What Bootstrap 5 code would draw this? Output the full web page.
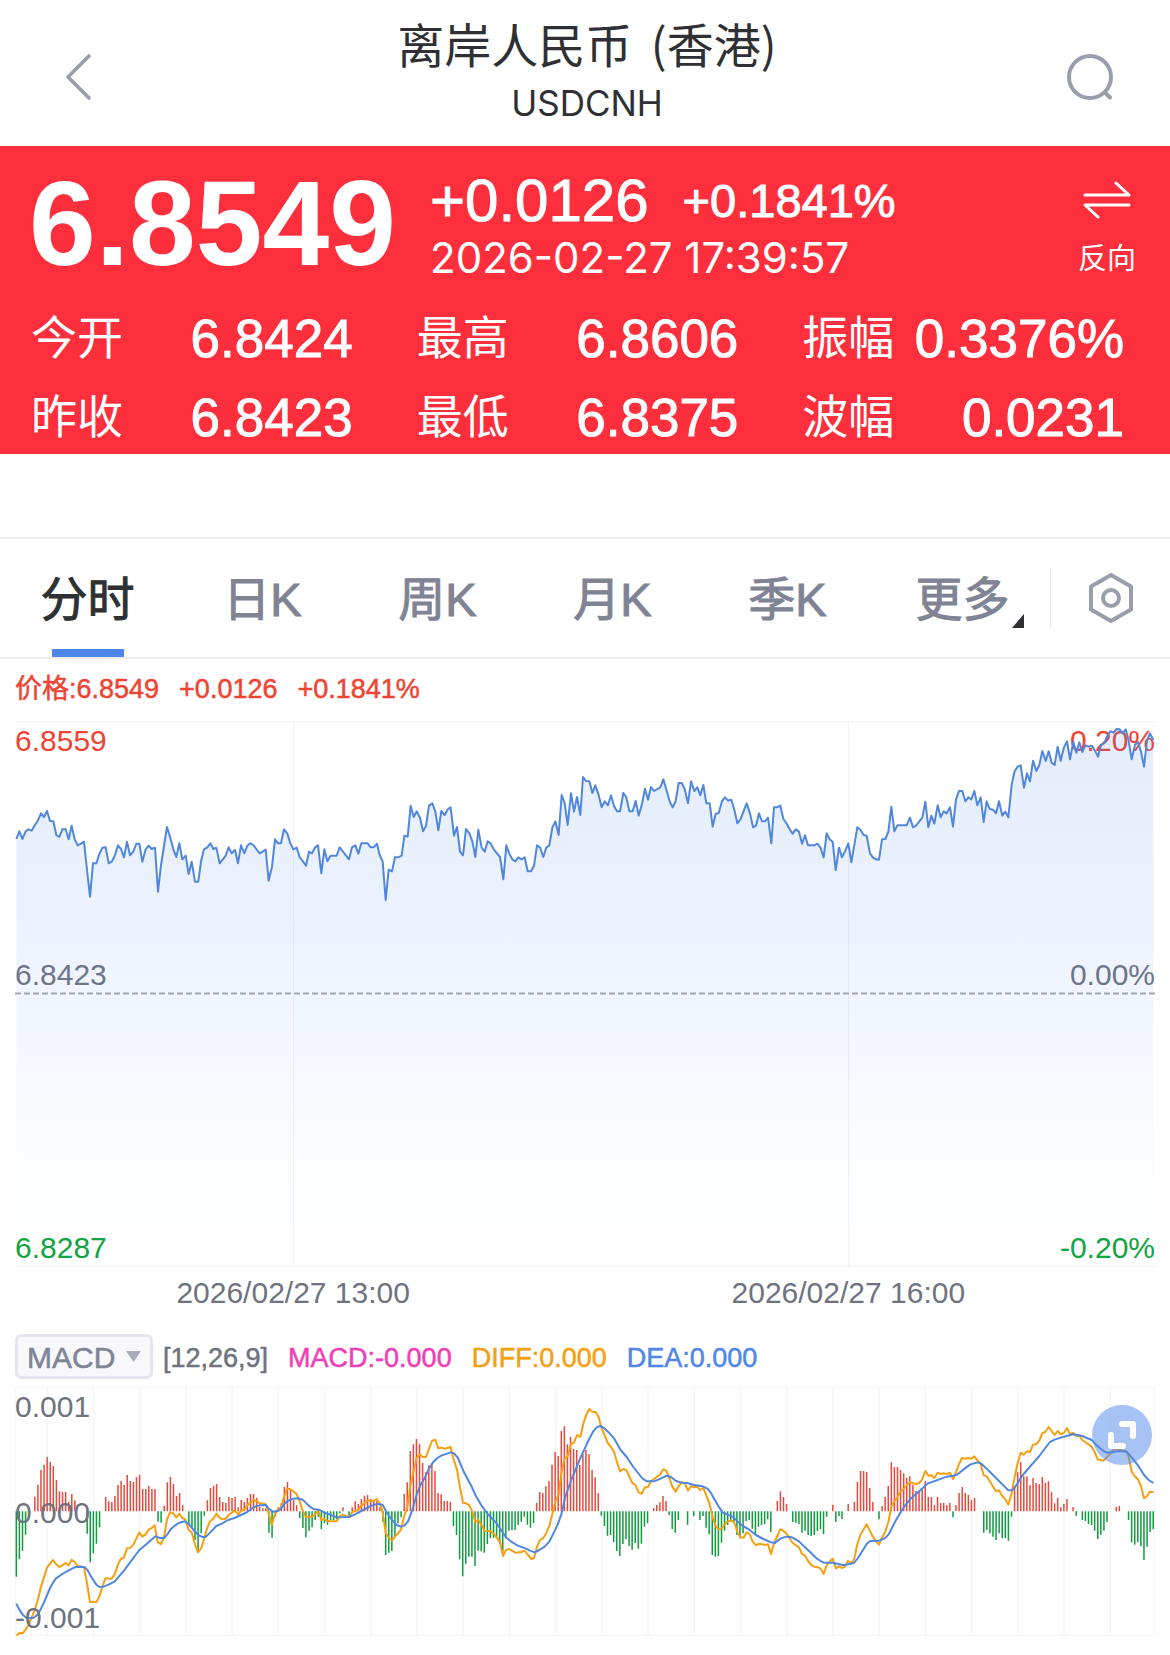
<!DOCTYPE html>
<html lang="zh-CN">
<head>
<meta charset="utf-8">
<meta name="viewport" content="width=device-width, initial-scale=1">
<title>离岸人民币 (香港) USDCNH</title>
<link href="https://cdn.jsdelivr.net/npm/bootstrap@5.3.0/dist/css/bootstrap.min.css" rel="stylesheet">
<style>
body { font-family: "Liberation Sans", "Noto Sans CJK SC", sans-serif; color: #2f3033; background: #fff; }
.medium-face { -webkit-text-stroke: 1px currentColor; }
.medium-small { -webkit-text-stroke: 0.5px currentColor; }

.app-head { height: 146px; padding: 0 58px 0 62px; }
.app-name { font-family: "Noto Sans CJK SC", sans-serif; font-size: 47px; line-height: 48px; font-weight: 400; padding-bottom: 12px; }
.app-code { font-family: Inter, sans-serif; font-size: 35px; line-height: 48px; }
.icon-btn { border: 0; background: none; padding: 0; color: #9a9dac; line-height: 0; }
.head-side { width: 46px; }

.quote { height: 308px; background: #fd2f3c; color: #fff; }
.quote-top { height: 152px; padding: 0 34px 0 29px; }
.quote-price { font-size: 120px; line-height: 120px; padding-top: 2px; }
.quote-side { padding: 12px 0 0 34px; }
.quote-diff { font-size: 60px; line-height: 60px; }
.quote-pct { font-size: 47px; line-height: 60px; padding-left: 34px; }
.quote-time { font-family: Inter, sans-serif; font-size: 42px; line-height: 54px; }
.flip-btn { font-family: "Noto Sans CJK SC", sans-serif; font-size: 29px; color: #fff; border: 0; background: none; padding: 8px 0 0; }
.flip-btn .flip-icon { height: 60px; }
.flip-btn .flip-text { line-height: 52px; }
.quote-grid { padding: 0 46px 0 31px; column-gap: 64px; }
.quote-cell { flex: 1 1 0; height: 79px; }
.quote-label { font-family: "Noto Sans CJK SC", sans-serif; font-size: 46px; line-height: 60px; padding-bottom: 8px; }
.quote-num { font-size: 53px; line-height: 60px; padding-top: 2px; }

.tab-bar { margin-top: 83px; height: 122px; border-top: 2px solid #ececef; border-bottom: 2px solid #ececef; }
.tab-bar .nav-link { position: relative; height: 118px; padding: 4px 0 0; font-size: 47px; line-height: 114px; font-weight: 400; text-align: center; color: #7f8394; }
.tab-bar .nav-link.active { color: #2f3033; }
.tab-bar .nav-link.active::after { content: ""; position: absolute; left: 50%; bottom: 0; width: 72px; margin-left: -36px; height: 8px; background: #4f87e8; }
.more-mark { position: absolute; right: 26px; bottom: 29px; border-left: 12px solid transparent; border-bottom: 14px solid #2f3033; }
.tab-tools { width: 120px; }
.tab-rule { width: 1px; height: 60px; background: #e6e6ea; }

.panel { padding: 0 15px; }
.legend-row { height: 62px; padding-bottom: 2px; font-size: 27px; column-gap: 20px; color: #ef4433; }
.plot svg { display: block; width: 100%; height: 100%; }
.price-plot { height: 546px; }
.macd-plot { height: 249px; }
.axis { font-size: 30px; line-height: 36px; color: #6f7380; padding-top: 2px; }
.axis-mid { padding-bottom: 2px; }
.up-text { color: #ef4433; }
.down-text { color: #0fa544; padding-bottom: 1px; }
.time-row { height: 54px; font-size: 30px; line-height: 52px; color: #6f7380; }
.time-first { width: 48.8%; }
.time-second { width: 48.6%; }
.macd-row { height: 66px; padding-top: 5px; font-size: 27px; color: #6f7380; column-gap: 20px; }
.macd-row > span { padding-top: 3px; }
.macd-pick { position: relative; margin-right: -10px; }
.macd-pick select { appearance: none; width: 138px; height: 45px; padding: 2px 0 0 9px; font-size: 30px; line-height: 36px; color: #7f8394; background: #f7f7fc; border: 3px solid #e5e5f0; border-radius: 6px; }
.macd-pick svg { position: absolute; right: 12px; top: 17px; pointer-events: none; }
.macd-tone { color: #f03fb6; }
.diff-tone { color: #f5a011; }
.dea-tone { color: #4f87e8; }
.zoom-btn { position: absolute; right: 3px; top: 18px; width: 60px; height: 60px; border: 0; border-radius: 50%; padding: 0; background: rgba(80, 136, 238, .5); }
.page-foot { height: 18px; }
</style>
<script src="https://cdn.jsdelivr.net/npm/bootstrap@5.3.0/dist/js/bootstrap.bundle.min.js"></script>
</head>
<body>

<header class="app-head d-flex align-items-center justify-content-between">
  <button class="icon-btn head-side text-start pt-2" type="button" aria-label="返回">
    <svg width="30" height="48" viewBox="0 0 30 48" fill="none" stroke="currentColor" stroke-width="3.6" stroke-linecap="round" stroke-linejoin="round"><path d="M27 3 6 24 27 45"/></svg>
  </button>
  <div class="text-center">
    <h1 class="app-name m-0">离岸人民币<span class="ms-2"> (香港)</span></h1>
    <div class="app-code">USDCNH</div>
  </div>
  <button class="icon-btn head-side pt-2" type="button" aria-label="搜索">
    <svg width="48" height="48" viewBox="0 0 48 48" fill="none" stroke="currentColor" stroke-width="4" stroke-linecap="round"><circle cx="24" cy="24" r="21"/><path d="M39 39.500 44 44.500"/></svg>
  </button>
</header>

<main>
<section class="quote">
  <div class="quote-top d-flex align-items-center">
    <strong class="quote-price">6.8549</strong>
    <div class="quote-side flex-fill">
      <div class="d-flex medium-face"><span class="quote-diff">+0.0126</span><span class="quote-pct">+0.1841%</span></div>
      <div class="quote-time">2026-02-27 17:39:57</div>
    </div>
    <button class="flip-btn d-flex flex-column align-items-center" type="button">
      <span class="flip-icon d-flex align-items-center"><svg width="48" height="40" viewBox="0 0 48 40" fill="none" stroke="#fff" stroke-width="3" stroke-linecap="round" stroke-linejoin="round"><path d="M2 15H46L33 3"/><path d="M46 25H2L15 37"/></svg></span>
      <span class="flip-text">反向</span>
    </button>
  </div>
  <div class="quote-grid d-flex">
    <div class="quote-cell d-flex align-items-center justify-content-between"><span class="quote-label">今开</span><span class="quote-num medium-face">6.8424</span></div>
    <div class="quote-cell d-flex align-items-center justify-content-between"><span class="quote-label">最高</span><span class="quote-num medium-face">6.8606</span></div>
    <div class="quote-cell d-flex align-items-center justify-content-between"><span class="quote-label">振幅</span><span class="quote-num medium-face">0.3376%</span></div>
  </div>
  <div class="quote-grid d-flex">
    <div class="quote-cell d-flex align-items-center justify-content-between"><span class="quote-label">昨收</span><span class="quote-num medium-face">6.8423</span></div>
    <div class="quote-cell d-flex align-items-center justify-content-between"><span class="quote-label">最低</span><span class="quote-num medium-face">6.8375</span></div>
    <div class="quote-cell d-flex align-items-center justify-content-between"><span class="quote-label">波幅</span><span class="quote-num medium-face">0.0231</span></div>
  </div>
</section>

<div class="tab-bar d-flex align-items-center">
  <nav class="nav flex-fill flex-nowrap medium-face" aria-label="周期">
    <a class="nav-link active col" href="#" aria-current="page">分时</a>
    <a class="nav-link col" href="#">日K</a>
    <a class="nav-link col" href="#">周K</a>
    <a class="nav-link col" href="#">月K</a>
    <a class="nav-link col" href="#">季K</a>
    <a class="nav-link col" href="#">更多<span class="more-mark"></span></a>
  </nav>
  <div class="tab-tools d-flex align-items-center">
    <span class="tab-rule"></span>
    <button class="icon-btn mx-auto" type="button" aria-label="图表设置">
      <svg width="48" height="52" viewBox="0 0 48 52" fill="none" stroke="currentColor" stroke-width="4" stroke-linejoin="round"><path d="M24 3 44 14.500V37.500L24 49 4 37.500V14.500Z"/><circle cx="24" cy="26" r="8"/></svg>
    </button>
  </div>
</div>

<section class="panel">
  <div class="legend-row medium-small d-flex align-items-center"><span>价格:6.8549</span><span>+0.0126</span><span>+0.1841%</span></div>
  <div class="plot price-plot position-relative">
    <div class="axis position-absolute top-0 start-0 w-100 h-100 d-flex flex-column">
      <div class="h-50 d-flex flex-column justify-content-between">
        <div class="d-flex justify-content-between up-text"><span>6.8559</span><span>0.20%</span></div>
        <div class="axis-mid d-flex justify-content-between"><span>6.8423</span><span>0.00%</span></div>
      </div>
      <div class="h-50 d-flex justify-content-between align-items-end down-text"><span>6.8287</span><span>-0.20%</span></div>
    </div>
    <div class="position-relative h-100"><svg id="priceChart" viewBox="45 3 3420 1638" preserveAspectRatio="none" role="img" aria-label="分时走势"></svg></div>
  </div>
  <div class="time-row d-flex text-center"><span class="time-first">2026/02/27 13:00</span><span class="time-second">2026/02/27 16:00</span></div>

  <div class="macd-row medium-small d-flex align-items-center">
    <label class="macd-pick">
      <select aria-label="指标"><option>MACD</option></select>
      <svg width="15" height="11" viewBox="0 0 15 11"><path d="M0 0H15L7.500 11Z" fill="#a9acb9"/></svg>
    </label>
    <span>[12,26,9]</span>
    <span class="macd-tone">MACD:-0.000</span>
    <span class="diff-tone">DIFF:0.000</span>
    <span class="dea-tone">DEA:0.000</span>
  </div>
  <div class="plot macd-plot position-relative">
    <svg id="macdChart" viewBox="45 201 3420 747" preserveAspectRatio="none" role="img" aria-label="MACD"></svg>
    <div class="axis position-absolute top-0 start-0 h-100 d-flex flex-column justify-content-between"><span>0.001</span><span>0.000</span><span>-0.001</span></div>
    <button class="zoom-btn" type="button" aria-label="全屏">
      <svg width="60" height="60" viewBox="0 0 60 60" fill="none" stroke="#fff" stroke-width="6" stroke-linecap="round" stroke-linejoin="round"><path d="M30 19H41V31"/><path d="M19 30V41H31"/></svg>
    </button>
  </div>
</section>
</main>
<div class="page-foot"></div>

<script>
/* Each series is stored in three blocks; a block is [x offset, flat list of x,y]. */
const price = [
 [0, [49,357,58,334,67,357,77,334,86,328,95,332,104,316,113,303,123,280,132,291,141,273,150,303,160,304,169,345,178,351,187,328,197,328,206,358,215,317,224,358,233,376,243,371,252,365,261,450,270,530,279,430,289,430,298,402,307,383,317,382,326,430,335,425,344,408,354,376,363,387,372,412,381,365,390,406,400,394,409,371,418,371,427,425,437,388,446,377,455,387,465,383,474,515,483,435,501,321,510,350,520,388,529,411,538,370,547,418,557,407,566,462,575,425,585,485,595,485,603,424,612,388,622,382,631,370,640,387,649,383,659,430,677,407,686,382,695,400,705,390,714,430,723,376,733,400,742,377,751,370,760,375,779,400,797,389,806,482,816,440,825,358,834,370,843,370,852,328,862,341,871,370,880,388,890,383,899,411,918,437,927,395,936,400,945,382,954,376,964,460,973,388,982,424,992,407,1010,407,1019,382,1047,418,1056,382,1066,376,1075,401,1084,370,1103,370,1112,382,1121,382,1131,371,1139,405,1148,425]],
 [1140, [17,540,26,449,36,454,45,412,54,412,65,407,73,347,83,350,92,257,101,291,110,274,120,293,129,334,138,318,147,257,157,250,166,275,175,331,184,273,194,285,203,268,212,262,222,347,231,321,240,395,249,406,258,327,268,340,277,364,286,411,295,329,305,383,314,395,323,364,332,370,341,388,360,411,370,478,379,376,388,401,397,418,406,424,415,412,424,418,434,412,443,454,453,454,462,437,471,376,480,382,490,411,499,382,508,376,517,323,526,304,536,345,545,225,554,250,563,315,573,220,582,275,591,231,601,285,609,171,618,183,628,184,637,219,646,196,656,226,665,262,674,244,684,256,693,226,702,258,711,274,720,274,730,219,739,232,748,274,758,274,767,243,776,287,785,256,795,206,804,239,813,201,822,213,841,202,850,178,869,244,878,262,887,243,896,189,905,189,914,207,924,250,933,184,943,213,952,202,961,226,970,195,979,250,989,250,998,320,1007,281,1016,280,1026,243,1035,232,1044,242,1054,239,1063,269,1072,310,1081,299,1100,250,1110,280,1119,322,1128,317,1137,280,1146,304,1155,304,1164,293,1174,370,1182,262,1191,262]],
 [2310, [31,257,40,297,50,311,59,328,68,341,77,328,87,335,96,371,105,346,114,376,133,376,142,371,151,382,161,412,170,340,179,358,188,365,197,450,207,383,216,412,225,394,235,370,244,427,262,322,271,329,281,345,290,347,300,400,309,413,318,418,327,419,336,358,346,357,355,335,364,260,373,334,382,316,410,316,420,293,429,322,438,317,457,293,466,245,475,322,484,287,493,311,503,256,512,292,521,274,530,280,540,262,549,320,558,238,567,213,577,213,586,244,595,232,604,238,613,213,622,256,632,232,641,306,650,244,659,267,669,269,678,280,687,244,697,287,706,275,715,292,725,195,734,153,743,140,752,136,762,203,771,160,780,184,789,122,799,153,808,135,817,93,827,123,836,94,845,128,854,135,863,80,872,122,882,82,891,64,900,118,910,66,919,98,928,67,937,96,946,76,957,80,966,77,975,92,984,110,993,75,1002,70,1011,50,1021,34,1030,38,1040,27,1049,28,1058,40,1067,28,1076,62,1085,118,1095,74,1104,66,1113,95,1122,140,1131,62,1140,40,1150,60]]
];
const diff = [
 [0, [49,947,58,939,68,940,77,928,86,915,95,893,104,870,113,842,122,804,132,772,141,743,150,731,159,720,168,732,178,741,187,736,197,729,206,736,215,719,224,726,233,738,252,742,261,790,270,846,289,846,298,830,307,801,316,775,335,776,344,763,353,736,362,717,372,712,381,685,390,684,400,674,418,637,427,650,436,644,446,629,455,624,464,616,473,667,483,672,492,652,501,598,510,577,520,580,529,592,538,581,547,594,556,598,566,630,575,637,584,670,594,697,604,684,612,658,621,626,630,604,640,596,649,581,658,593,667,598,677,596,686,585,695,578,704,571,714,583,723,573,733,568,742,556,751,548,760,540,769,543,779,550,797,552,806,580,815,614,825,582,834,567,843,562,852,532,861,507,871,507,880,514,890,523,899,544,908,572,917,590,935,590,945,584,954,570,964,600,973,597,982,604,1010,604,1019,589,1028,584,1047,592,1056,577,1065,573,1075,570,1084,556,1093,550,1102,541,1112,543,1121,543,1130,537,1139,550]],
 [1140, [8,577,17,638,26,653,36,662,45,649,54,641,63,629,72,590,82,562,91,497,101,453,110,414,119,403,129,411,138,411,147,386,156,363,166,359,175,385,184,383,194,386,212,381,221,419,231,449,240,503,249,548,258,550,268,556,277,575,286,607,295,599,304,614,314,632,332,633,341,641,350,652,360,667,369,708,378,690,388,687,406,698,424,696,434,692,444,705,454,717,462,714,471,680,480,660,489,655,498,641,508,617,517,583,526,545,536,523,545,454,554,415,563,409,573,372,582,368,591,345,601,351,610,311,619,284,628,267,637,275,647,276,656,292,665,325,684,370,693,381,702,396,711,426,720,454,730,447,739,450,757,489,766,495,776,517,785,521,795,502,804,501,813,484,822,477,832,470,841,463,850,448,859,452,868,474,877,500,887,515,896,498,905,487,914,489,924,512,933,498,942,502,951,500,961,510,970,504,979,527,988,549,998,592,1008,620,1016,628,1026,624,1035,611,1044,604,1053,601,1063,608,1072,636,1081,652,1091,653,1100,637,1109,642,1118,665,1128,676,1137,671,1155,675,1164,673,1173,702,1182,670]],
 [2310, [22,648,31,628,40,632,50,642,59,655,68,669,87,682,96,702,105,706,114,723,124,735,133,740,142,741,151,745,161,762,170,736,179,725,188,716,198,745,207,739,216,744,225,740,234,722,244,730,253,716,262,672,271,645,281,628,290,613,299,631,308,649,318,664,327,674,336,654,346,634,355,606,364,560,373,544,382,532,392,514,401,507,410,495,420,486,429,490,438,492,447,489,456,480,466,453,475,467,484,466,493,474,503,458,512,462,521,460,530,462,540,458,549,477,558,457,567,432,576,414,586,416,595,414,604,416,613,409,622,421,632,432,641,466,650,469,678,514,687,511,697,528,706,538,715,554,725,518,734,470,743,430,752,398,761,404,771,394,780,396,789,374,799,372,808,362,817,339,826,336,836,321,845,333,854,345,863,333,872,343,882,338,891,324,900,343,909,338,919,348,928,348,937,360,965,380,974,396,983,418,1001,422,1011,411,1020,402,1030,390,1048,387,1058,392,1067,392,1076,410,1085,455,1094,469,1104,478,1113,498,1122,535,1131,528,1140,515,1150,516]]
];
const dea = [
 [0, [49,851,58,869,68,884,80,894,100,894,113,884,122,868,132,847,150,804,159,788,168,775,187,762,206,751,224,742,243,740,255,742,263,751,272,768,289,794,298,801,310,800,326,794,344,784,372,752,418,690,440,672,466,649,480,654,492,654,502,643,512,628,524,617,538,608,554,604,566,612,584,634,598,647,608,651,618,650,630,638,649,618,667,610,684,600,704,594,723,585,742,576,760,562,778,556,797,555,806,566,818,575,834,573,843,566,854,550,866,541,880,536,893,535,908,539,926,557,940,567,960,570,973,578,990,584,1010,592,1047,591,1065,583,1084,573,1112,558,1130,552,1139,552]],
 [1140, [0,553,8,555,20,577,36,600,50,615,63,620,74,616,84,604,96,573,110,524,121,496,132,478,147,446,160,426,172,414,184,407,212,397,222,400,234,414,252,457,276,502,286,525,304,556,323,582,350,610,378,652,394,665,412,676,438,686,450,692,465,697,478,690,494,680,508,665,520,641,533,614,544,583,556,530,576,474,602,412,627,358,640,334,650,322,660,318,672,324,684,335,702,355,722,390,740,411,760,441,786,474,800,484,822,484,842,476,860,467,872,470,888,483,904,488,922,489,942,495,968,499,984,507,994,521,1016,560,1028,578,1056,589,1088,618,1108,629,1128,645,1150,657,1173,667,1186,669]],
 [2310, [16,667,32,656,48,650,66,652,87,664,105,682,124,700,142,717,161,728,188,728,222,736,234,733,252,729,264,714,290,672,300,663,327,662,344,655,356,643,376,604,400,563,420,538,438,522,456,506,474,490,500,481,530,470,549,467,560,465,576,452,600,434,622,427,632,430,650,446,678,474,697,493,715,511,728,510,740,494,756,468,780,440,808,408,826,384,840,366,854,359,882,350,909,343,937,348,965,360,983,379,1002,394,1012,398,1030,396,1048,393,1070,395,1085,412,1104,436,1122,465,1136,480,1150,489]]
];
/* Histogram: [x of first bar, bar ends]; the zero line is at 574. */
const hist = [
 [49, [770,718,692,644,574,574,530,494,450,434,411,426,438,480,514,516,516,545,522,541,574,574,574,641,727,700,671,622,574,531,544,546,528,495,483,495,465,483,486,472,465,507,507,498,507,507,605,608,557,487,471,492,528,519,556,574,613,627,660,690,640,587,541,504,498,492,531,546,548,531,534,531,562,540,546,534,522,522,534,560,565,565,638,653,590,562,550,500,486,508,540,556,594,624,652,633,622,600,590,627,610,614,600,600,598,580,562,574,590,562,544,552,537,527,525,537,540,543,562,605]],
 [1157, [705,698,693,650,610,592,522,487,393,373,357,373,429,457,436,429,453,519,523,543,543,546,618,645,718,769,731,710,710,738,692,694,698,672,655,653,652,672,698,655,632,630,630,615,605,590,614,623,609,548,516,519,499,484,434,396,408,333,319,373,350,387,390,435,402,390,402,450,472,519,587,618,647,645,666,693,708,672,657,678,689,669,686,671,620,610,574,564,555,547,528,543,585,627,638,600,574,574,614,574,589,574,600,588,623,643,705,710,708,668,632,615,605,608,645,655,640,604,600,626,643,620,615,613,598,636,574]],
 [2332, [543,514,531,552,574,606,608,612,638,632,645,648,645,633,628,643,590,574,554,606,588,597,574,552,574,546,486,453,453,456,504,546,574,598,558,531,498,427,441,441,450,460,474,469,495,513,516,508,484,530,531,556,531,549,549,556,549,592,556,519,501,519,525,540,534,574,574,638,630,640,650,660,640,655,654,662,590,500,457,427,469,469,496,474,489,493,471,488,484,517,550,534,562,552,537,574,561,587,574,600,603,612,615,632,657,644,632,606,574,574,561,558,574,574,600,667,674,666,678,720,680,636,627]]
];
const STEP = 9.243;
const path = blocks => "M" + blocks.flatMap(([dx, v]) => {
  const out = [];
  for (let i = 0; i < v.length; i += 2) out.push((v[i] + dx) + " " + v[i + 1]);
  return out;
}).join("L");
const stroke = (d, color, w, extra = "") => `<path d="${d}" fill="none" stroke="${color}" stroke-width="${w}" stroke-linejoin="round" vector-effect="non-scaling-stroke" ${extra}/>`;

const line = path(price);
document.getElementById("priceChart").innerHTML =
  `<defs><linearGradient id="fade" gradientUnits="userSpaceOnUse" x1="0" y1="30" x2="0" y2="1638"><stop offset="0" stop-color="#4f87e8" stop-opacity=".15"/><stop offset=".4" stop-color="#4f87f0" stop-opacity=".1"/><stop offset=".75" stop-color="#4f90f0" stop-opacity=".03"/><stop offset="1" stop-color="#4f87e8" stop-opacity="0"/></linearGradient></defs>` +
  stroke("M45 4.500H3465M45 1639.500H3465", "#f5f5f7", 2) + stroke("M880.500 3V1641M2545.500 3V1641", "#f1f2f6", 1) +
  `<path d="${line}V1641H49Z" fill="url(#fade)"/>` + stroke("M45 820.500H3465", "#a3a7b3", 2, 'stroke-dasharray="6 3"') +
  stroke(line, "#5087dc", 2);

let grid = "M45 202.500H3465M45 946.500H3465M46.500 201V948M3463.500 201V948";
for (let i = 10; i < 369; i += 15) grid += `M${(49.5 + i * STEP).toFixed(1)} 201V948`;
let up = "", down = "";
for (const [x0, tops] of hist) tops.forEach((y, i) => {
  const seg = `M${(x0 + i * STEP).toFixed(1)} 574V${y}`;
  if (y < 574) up += seg; else if (y > 574) down += seg;
});
document.getElementById("macdChart").innerHTML =
  stroke(grid, "#f6f6f8", 1.5) + stroke(up, "#e8493c", 1.5) + stroke(down, "#0f9c3f", 1.5) +
  stroke(path(diff), "#f5a011", 2) + stroke(path(dea), "#4f87e0", 2);
</script>
</body>
</html>
